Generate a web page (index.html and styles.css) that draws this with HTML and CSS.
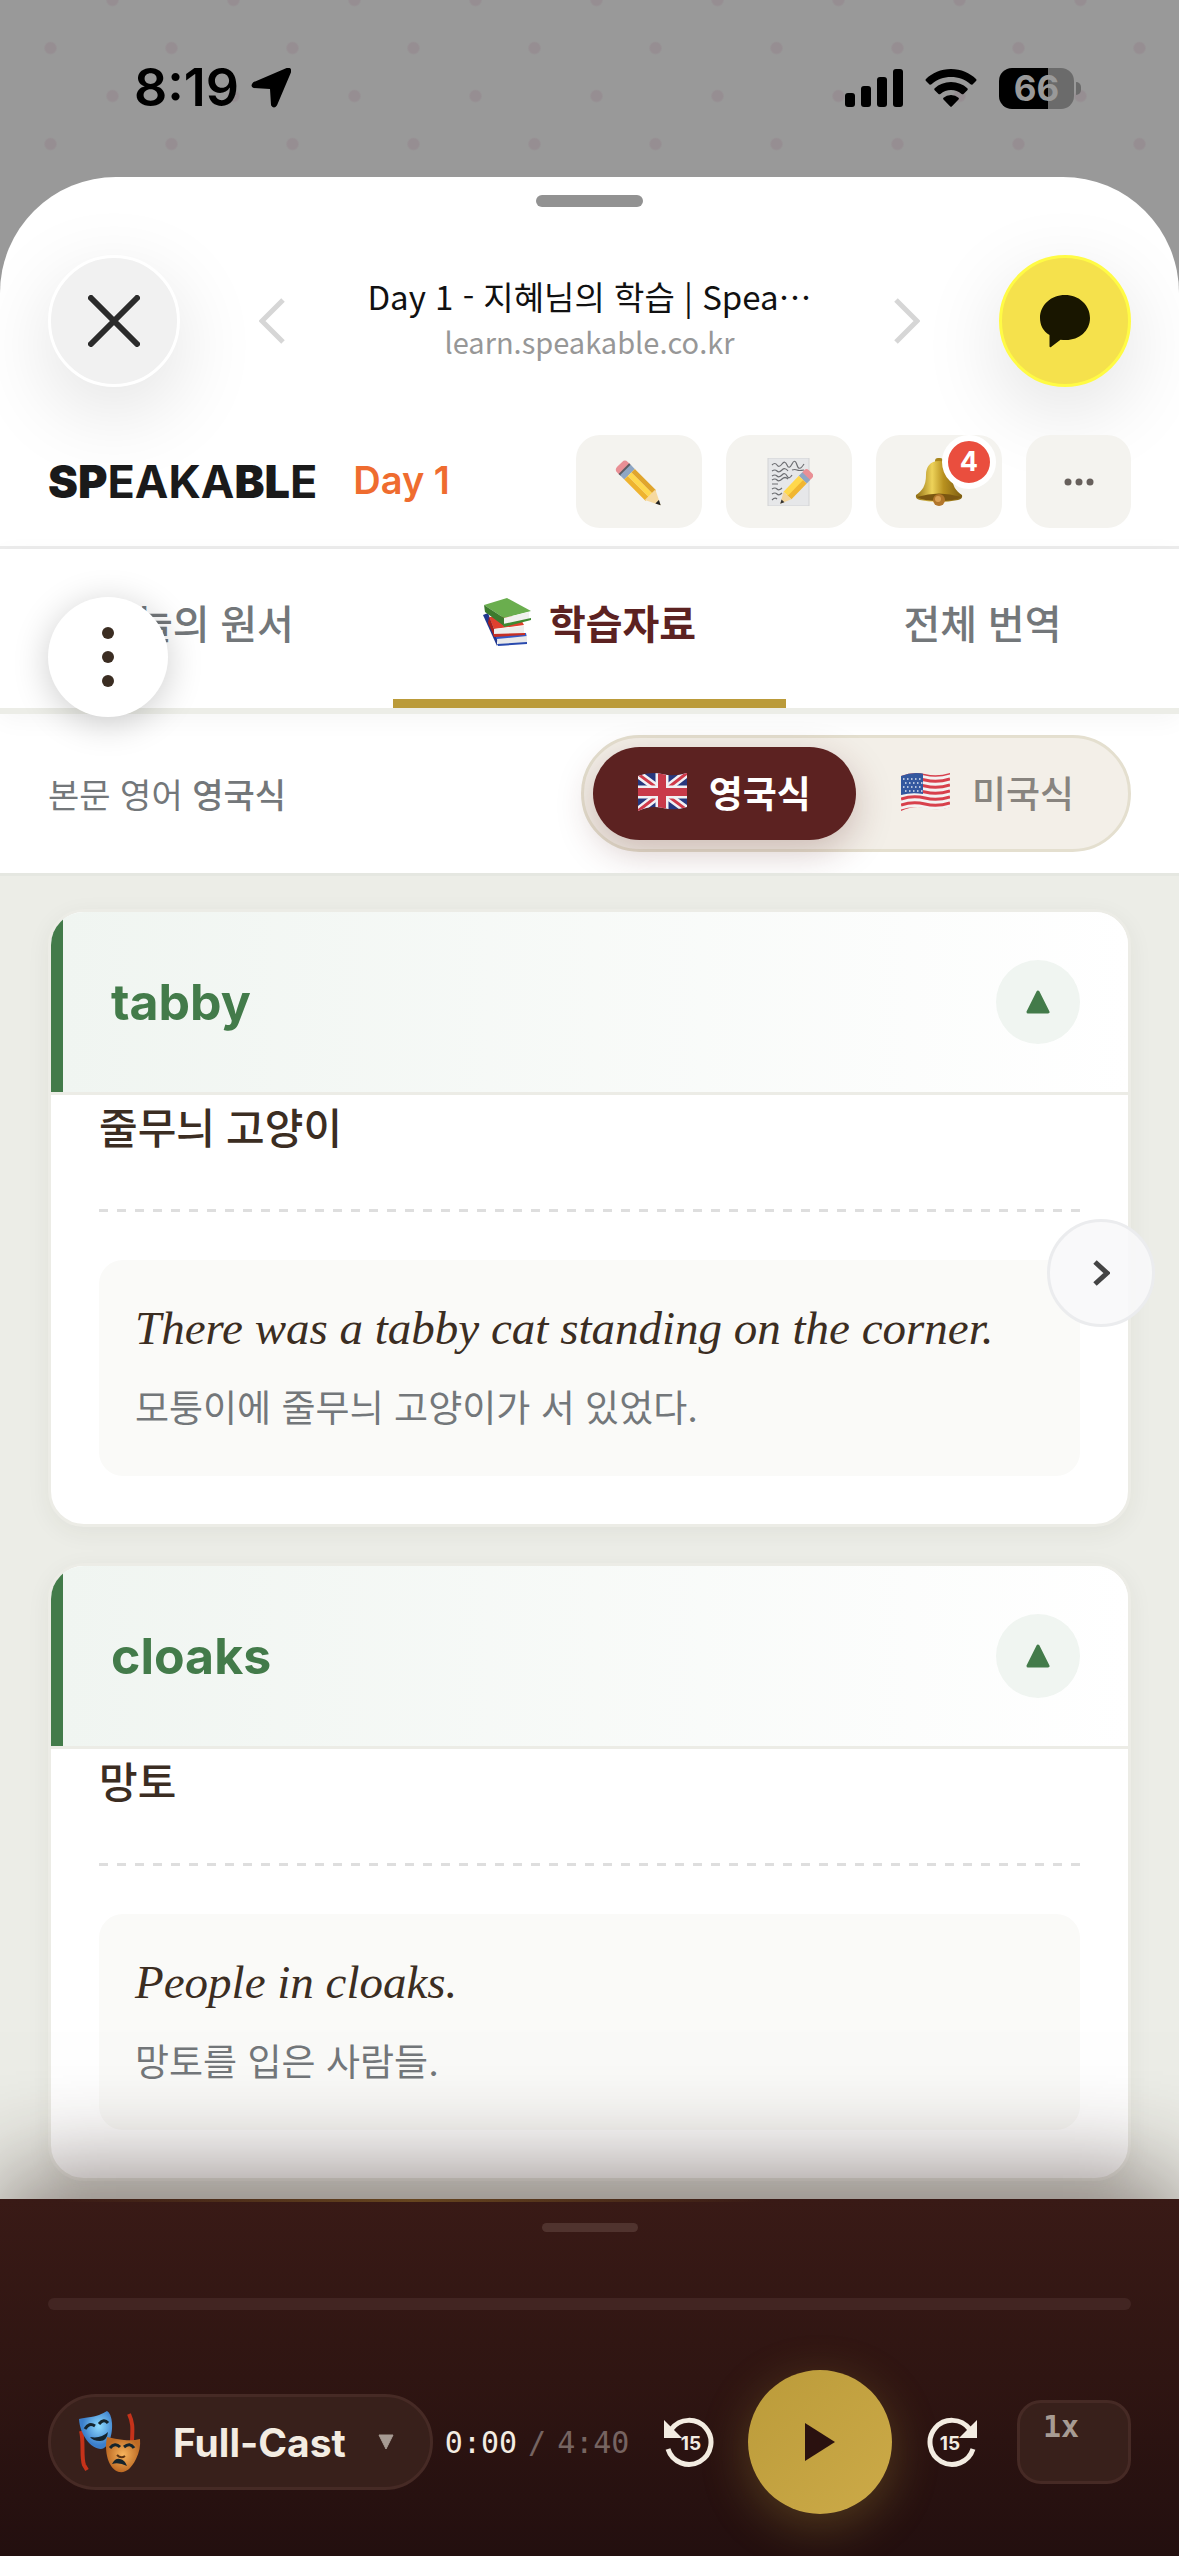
FILE: index.html
```html
<!DOCTYPE html>
<html lang="ko">
<head>
    <meta charset="UTF-8">
    <meta name="viewport" content="width=device-width, initial-scale=1.0">
    <title>Day 1 - 지혜님의 학습 | Speakable</title>
    <link rel="stylesheet" href="styles.css">
</head>
<body>
    <div class="status-bar">
        <div class="status-left">
            <span class="clock">8:19</span>
            <svg class="icon-location" viewBox="0 0 40 40"><path d="M36 1Q40 0 39 4L25 37Q23 40 21 37L20 21Q20 20 19 20L3 19Q0 18 3 15Z" stroke="#000" stroke-width="2" stroke-linejoin="round"/></svg>
        </div>
        <div class="status-right">
            <svg class="icon-signal" viewBox="0 0 58 38"><rect y="24" width="10" height="14" rx="3"/><rect x="16" y="17" width="10" height="21" rx="3"/><rect x="32" y="8" width="10" height="30" rx="3"/><rect x="48" width="10" height="38" rx="3"/></svg>
            <svg class="icon-wifi" viewBox="0 0 52 38"><path d="M26 0C36 0 45 4 51 10Q52 11 51 12L47.500 15.500Q46.500 16 45.500 15.200C40 10.500 33.500 8 26 8S12 10.500 6.500 15.200Q5.500 16 4.500 15.500L1 12Q0 11 1 10C7 4 16 0 26 0ZM26 13C32.500 13 38 15.300 42.300 19.200Q43.200 20.200 42.300 21.200L38.500 25Q37.600 25.700 36.600 25C33.600 22.500 30 21 26 21S18.400 22.500 15.400 25Q14.400 25.700 13.500 25L9.700 21.200Q8.800 20.200 9.700 19.200C14 15.300 19.500 13 26 13ZM26 26Q30.500 26 33.500 28.700Q34.300 29.600 33.500 30.400L27 37.300Q26 38.300 25 37.300L18.500 30.400Q17.700 29.600 18.500 28.700Q21.500 26 26 26Z"/></svg>
            <span class="battery">66</span>
        </div>
    </div>

    <div class="sheet">
        <div class="sheet-handle"></div>
        <div class="browser-bar">
            <button class="round-btn close-btn" aria-label="닫기">
                <svg width="52" height="52" viewBox="0 0 52 52"><path d="M3 3L49 49M49 3L3 49" fill="none" stroke="#2b2b2b" stroke-width="6" stroke-linecap="round"/></svg>
            </button>
            <div class="browser-nav">
                <button class="nav-arrow" aria-label="뒤로"><svg width="26" height="46" viewBox="0 0 26 46"><path d="M24 2L3 23L24 44" fill="none" stroke="#d6d6d6" stroke-width="5"/></svg></button>
                <div class="page-info">
                    <div class="page-title">Day 1 - 지혜님의 학습 | Spea⋯</div>
                    <div class="page-url">learn.speakable.co.kr</div>
                </div>
                <button class="nav-arrow" aria-label="앞으로"><svg width="26" height="46" viewBox="0 0 26 46"><path d="M2 2L23 23L2 44" fill="none" stroke="#d6d6d6" stroke-width="5"/></svg></button>
            </div>
            <button class="round-btn kakao-btn" aria-label="카카오톡 공유">
                <svg width="52" height="54" viewBox="0 0 52 54"><path d="M26 1C40 1 51 11 51 24S40 46 27 46Q24 46 21.500 45.700L12 53Q10.500 54 10.500 52V41C4 37 1 31 1 24C1 11 12 1 26 1Z" fill="#191600"/></svg>
            </button>
        </div>

        <header class="header">
            <div class="brand">
                <span class="logo">SP<span class="logo-thin">EAKA</span>BL<span class="logo-thin">E</span></span>
                <span class="day">Day 1</span>
            </div>
            <div class="header-actions">
                <button class="header-btn" aria-label="쓰기">
                    <svg width="48" height="48" viewBox="0 0 48 48">
                        <g transform="translate(5 6) rotate(45)">
                            <rect x="0" y="-7" width="10" height="15" rx="4" fill="#e98f95"/>
                            <rect x="6" y="-7" width="3" height="15" fill="#5a5c63"/>
                            <rect x="8" y="-7" width="6" height="15" fill="#8ea6c4"/>
                            <rect x="14" y="-7" width="30" height="5" fill="#e0a52c"/>
                            <rect x="14" y="-2" width="30" height="5" fill="#ffd84c"/>
                            <rect x="14" y="3" width="30" height="5" fill="#eeb32f"/>
                            <path d="M43 -7L58 0.500L43 8Z" fill="#f6d9a0"/>
                            <path d="M53 -2L58 0.500L53 3Z" fill="#222"/>
                        </g>
                    </svg>
                </button>
                <button class="header-btn" aria-label="메모">
                    <svg width="48" height="48" viewBox="0 0 48 48">
                        <rect x="3" y="0" width="41" height="48" fill="#e6e7e9" stroke="#d2d3d5"/>
                        <path d="M7 7q3-3 5 0t5-1t5 1t5-1t5 1t7-1M7 13q3-2 5 0t5-1t6 1M27 12q3-1 5 0t7 0M7 18q3-2 5 0t5-1t5 1t5-1M7 22q3-2 5 0t5-1t6 0M7 26h6M7 31q3-2 5 0t5-1M7 36q3-2 5 0t5-1M7 42q3-3 5-1" fill="none" stroke="#6d6e72" stroke-width="1.200"/>
                        <g transform="translate(43 17) rotate(134)">
                            <rect x="-4" y="-5" width="8" height="11" rx="3" fill="#e98f95"/>
                            <rect x="2" y="-5" width="5" height="11" fill="#8ea6c4"/>
                            <rect x="7" y="-5" width="22" height="6" fill="#f0b632"/>
                            <rect x="7" y="0" width="22" height="6" fill="#ffd84c"/>
                            <path d="M29 -5L40 0L29 6Z" fill="#f3d49b"/>
                            <path d="M36 -2L40 0L36 2Z" fill="#333"/>
                        </g>
                    </svg>
                </button>
                <button class="header-btn" aria-label="알림 4개">
                    <svg width="48" height="48" viewBox="0 0 48 48">
                        <defs>
                            <linearGradient id="bell" x1="0" x2="1"><stop offset="0" stop-color="#8f6d12"/><stop offset=".35" stop-color="#eed35a"/><stop offset=".6" stop-color="#b8911f"/><stop offset="1" stop-color="#7d5d10"/></linearGradient>
                        </defs>
                        <rect x="20" y="0" width="8" height="6" rx="3" fill="#a8851c"/>
                        <path d="M24 3C33 3 37 9 37 17C37 28 41 33 47 37Q48 41 43 42Q24 46 5 42Q0 41 1 37C7 33 11 28 11 17C11 9 15 3 24 3Z" fill="url(#bell)"/>
                        <path d="M2 39Q24 32 46 39Q40 43 24 43T2 39Z" fill="#7b5711"/>
                        <circle cx="24" cy="42" r="6" fill="#b2762a"/>
                        <circle cx="23" cy="41" r="3" fill="#d99f52"/>
                    </svg>
                    <span class="badge">4</span>
                </button>
                <button class="header-btn more-btn" aria-label="더보기">
                    <svg width="30" height="8" viewBox="0 0 30 8" fill="#67605c"><circle cx="4" cy="4" r="3.500"/><circle cx="15" cy="4" r="3.500"/><circle cx="26" cy="4" r="3.500"/></svg>
                </button>
            </div>
        </header>

        <nav class="tabs">
            <button class="tab">오늘의 원서</button>
            <button class="tab active">
                <svg width="48" height="48" viewBox="0 0 48 48">
                    <path d="M0 17L5 15L14 40V48Z" fill="#20378f"/>
                    <path d="M12 37L43 35L44 40L15 44Z" fill="#3559c7"/>
                    <path d="M14 41L44 38V45L15 48Z" fill="#e9e9ea"/>
                    <path d="M14 46L44 44V46L15 48Z" fill="#294aae"/>
                    <path d="M6 19L36 18L41 27L11 31Z" fill="#e0402f"/>
                    <path d="M6 19L11 31V38L5 25Z" fill="#a9201b"/>
                    <path d="M11 31L41 28V36L11 37Z" fill="#eeeeec"/>
                    <path d="M10 36L42 35V37L11 39Z" fill="#c62f24"/>
                    <path d="M1 7L24 0L48 13L21 20Z" fill="#6aae4e"/>
                    <path d="M1 7L21 20V28L2 14Z" fill="#3c7a2e"/>
                    <path d="M21 20L46 14V21L21 27Z" fill="#f1f1ee"/>
                    <path d="M20 26L48 20V22L21 29Z" fill="#3f8a31"/>
                </svg>
                학습자료
            </button>
            <button class="tab">전체 번역</button>
            <button class="menu-fab" aria-label="메뉴"><i></i><i></i><i></i></button>
        </nav>

        <div class="accent-bar">
            <span class="accent-label">본문 영어 <b>영국식</b></span>
            <div class="accent-toggle">
                <button class="accent-option active">
                    <svg width="49" height="40" viewBox="0 0 49 40">
                        <clipPath id="flag"><path d="M0 4Q12 -1 24 2T49 1V35Q37 39 25 36T0 39Z"/></clipPath>
                        <g clip-path="url(#flag)">
                            <rect width="49" height="40" fill="#27387e"/>
                            <path d="M0 2L49 38M49 1L0 39" stroke="#f1f1f4" stroke-width="8"/>
                            <path d="M0 2L49 38M49 1L0 39" stroke="#cf3a4a" stroke-width="3"/>
                            <path d="M24 0V40M0 20H49" stroke="#f1f1f4" stroke-width="13"/>
                            <path d="M24 0V40M0 20H49" stroke="#c93a4a" stroke-width="8"/>
                        </g>
                    </svg>
                    영국식
                </button>
                <button class="accent-option">
                    <svg width="49" height="40" viewBox="0 0 49 40">
                        <g clip-path="url(#flag)">
                            <rect width="49" height="40" fill="#f4f2f2"/>
                            <path d="M0 3Q12 -1 24 2T49 1M0 9Q12 5 24 8T49 7M0 15Q12 11 24 14T49 13M0 21Q12 17 24 20T49 19M0 27Q12 23 24 26T49 25M0 33Q12 29 24 32T49 31M0 39Q12 35 24 38T49 37" fill="none" stroke="#d8404c" stroke-width="3"/>
                            <path d="M0 0H22V22Q11 20 0 23Z" fill="#34589f"/>
                            <path d="M2 7H22M4 11H22M2 15H22M4 19H22" stroke="#dfe6f2" stroke-width="1.500" stroke-dasharray="1.500 2.500"/>
                        </g>
                    </svg>
                    미국식
                </button>
            </div>
        </div>

        <main class="word-list">
            <article class="word-card">
                <div class="word-head">
                    <h2>tabby</h2>
                    <button class="fold-btn" aria-label="접기"><svg width="24" height="24" viewBox="0 0 24 24"><path d="M12 2L22 22H2Z" fill="#437b4a" stroke="#437b4a" stroke-width="3" stroke-linejoin="round"/></svg></button>
                </div>
                <div class="word-body">
                    <p class="meaning">줄무늬 고양이</p>
                    <div class="dashed-line"></div>
                    <div class="example">
                        <p class="example-en">There was a tabby cat standing on the corner.</p>
                        <p class="example-ko">모퉁이에 줄무늬 고양이가 서 있었다.</p>
                    </div>
                </div>
            </article>
            <article class="word-card">
                <div class="word-head">
                    <h2>cloaks</h2>
                    <button class="fold-btn" aria-label="접기"><svg width="24" height="24" viewBox="0 0 24 24"><path d="M12 2L22 22H2Z" fill="#437b4a" stroke="#437b4a" stroke-width="3" stroke-linejoin="round"/></svg></button>
                </div>
                <div class="word-body">
                    <p class="meaning">망토</p>
                    <div class="dashed-line"></div>
                    <div class="example">
                        <p class="example-en">People in cloaks.</p>
                        <p class="example-ko">망토를 입은 사람들.</p>
                    </div>
                </div>
            </article>
            <button class="next-fab" aria-label="다음"><svg width="18" height="28" viewBox="0 0 18 28"><path d="M3 3L15 14L3 25" fill="none" stroke="#444" stroke-width="5"/></svg></button>
        </main>
    </div>

    <footer class="player">
        <div class="player-handle"></div>
        <input type="range" class="progress" min="0" max="280" value="0" aria-label="재생 위치">
        <div class="controls">
            <div class="track">
                <button class="cast-btn">
                    <svg width="62" height="62" viewBox="0 0 62 62">
                        <defs>
                            <radialGradient id="blueMask" cx=".6" cy=".4"><stop offset="0" stop-color="#8fdcff"/><stop offset="1" stop-color="#3b7ecb"/></radialGradient>
                            <radialGradient id="goldMask"><stop offset="0" stop-color="#f7b45c"/><stop offset="1" stop-color="#bd6a24"/></radialGradient>
                        </defs>
                        <path d="M2 20C5 30 2 46 5 54L8 59M50 3C55 14 53 20 53 32" fill="none" stroke="#c5321a" stroke-width="4"/>
                        <path d="M0 8Q4 7 12 6T28 0Q32 2 33 12C34 26 28 38 22 38C12 38 1 24 0 8Z" fill="url(#blueMask)"/>
                        <path d="M6 18q4-7 10-3M20 13q5-6 9-1" fill="none" stroke="#15242c" stroke-width="3"/>
                        <path d="M11 26Q22 28 29 21Q28 30 21 30T11 26Z" fill="#15242c"/>
                        <path d="M28 26Q36 28 45 29T61 28Q62 38 57 48C52 58 47 62 40 61C29 58 25 40 28 26Z" fill="url(#goldMask)"/>
                        <path d="M31 37q5-6 10-1M45 36q6-5 10 1" fill="none" stroke="#15242c" stroke-width="3"/>
                        <path d="M38 44q4 4 8 1" fill="none" stroke="#5c3312" stroke-width="2"/>
                        <path d="M33 53Q36 47 41 48T48 55Q40 51 33 53Z" fill="#15242c"/>
                    </svg>
                    <span>Full-Cast</span>
                    <svg width="16" height="16" viewBox="0 0 16 16"><path d="M1 1H15L8 15Z" fill="#a79b93" stroke="#a79b93" stroke-linejoin="round"/></svg>
                </button>
                <div class="time">
                    <span>0:00</span>
                    <span class="time-total">/</span>
                    <span class="time-total">4:40</span>
                </div>
            </div>
            <button class="skip-btn" aria-label="15초 뒤로">
                <svg width="50" height="50" viewBox="0 0 50 50">
                    <path d="M7.500 12A22 22 0 1 1 4 32" fill="none" stroke="#f3ece2" stroke-width="5"/>
                    <path d="M0 3V21H18Z" fill="#f3ece2"/>
                    <text x="27" y="33" text-anchor="middle">15</text>
                </svg>
            </button>
            <button class="play-btn" aria-label="재생"><svg width="30" height="38" viewBox="0 0 30 38"><path d="M0 0L30 19L0 38Z" fill="#2a110f"/></svg></button>
            <button class="skip-btn" aria-label="15초 앞으로">
                <svg width="50" height="50" viewBox="0 0 50 50">
                    <path d="M42.500 12A22 22 0 1 0 46 32" fill="none" stroke="#f3ece2" stroke-width="5"/>
                    <path d="M50 3V21H32Z" fill="#f3ece2"/>
                    <text x="23" y="33" text-anchor="middle">15</text>
                </svg>
            </button>
            <select class="speed" aria-label="재생 속도">
                <option>1x</option>
            </select>
        </div>
    </footer>
</body>
</html>
```
FILE: styles.css
```css
* {
    box-sizing: border-box;
    margin: 0;
    padding: 0;
}
body {
    display: flex;
    flex-direction: column;
    min-height: 100vh;
    font-family: Inter, "Noto Sans CJK KR", sans-serif;
    color: #3b2d22;
    /* 점 무늬 배경 */
    background-color: #999;
    background-image:
        radial-gradient(circle, #968e92 5px, transparent 7px),
        radial-gradient(circle, #968e92 5px, transparent 7px);
    background-size: 121px 96px;
    background-position: -10px 0, 52px 48px;
}
button, select {
    font-family: inherit;
    border: none;
    background: none;
    color: inherit;
    cursor: pointer;
}
svg {
    display: block;
    flex-shrink: 0;
}

/* 상태 표시줄 */
.status-bar {
    display: flex;
    justify-content: space-between;
    height: 177px;
    padding: 63px 105px 0 134px;
    color: #000;
}
.status-left, .status-right {
    display: flex;
    align-items: center;
    height: 50px;
}
.status-left {
    gap: 12px;
}
.status-right {
    gap: 22px;
}
.clock {
    font-size: 52px;
    font-weight: 600;
    line-height: 50px;
}
.icon-location {
    width: 40px;
}
.icon-signal {
    width: 58px;
}
.icon-wifi {
    width: 52px;
}
.battery {
    position: relative;
    width: 75px;
    height: 41px;
    border-radius: 13px;
    background: linear-gradient(90deg, #000 66%, #6b6b6b 66%);
    color: #999;
    font-size: 35px;
    font-weight: 700;
    line-height: 41px;
    text-align: center;
}
.battery::after {
    content: "";
    position: absolute;
    top: 14px;
    right: -7px;
    width: 5px;
    height: 13px;
    border-radius: 0 5px 5px 0;
    background: #6b6b6b;
}

/* 인앱 브라우저 */
.sheet {
    flex: 1;
    display: flex;
    flex-direction: column;
    padding-top: 18px;
    border-radius: 116px 116px 0 0;
    background: #fff;
    overflow: hidden;
}
.sheet-handle {
    width: 107px;
    height: 12px;
    margin: 0 auto;
    border-radius: 6px;
    background: #929292;
}
.browser-bar {
    display: flex;
    align-items: center;
    margin-top: 48px;
    padding: 0 48px;
}
.round-btn {
    display: flex;
    align-items: center;
    justify-content: center;
    width: 132px;
    height: 132px;
    border-radius: 50%;
    box-shadow: 0 24px 84px rgba(0, 0, 0, 0.12);
}
.close-btn {
    border: 3px solid #fff;
    background: #f1f1f1;
}
.kakao-btn {
    border: 3px solid #fffb45;
    background: #f5e14c;
}
.browser-nav {
    flex: 1;
    display: flex;
    align-items: center;
    justify-content: space-between;
    padding: 0 79px;
}
.page-info {
    padding-bottom: 8px;
    text-align: center;
    white-space: nowrap;
}
.page-title {
    font-family: "Noto Sans CJK KR", sans-serif;
    font-size: 33px;
    line-height: 48px;
    color: #111;
}
.page-url {
    font-family: "Noto Sans CJK KR", sans-serif;
    font-size: 29px;
    line-height: 42px;
    color: #979797;
}

.header {
    display: flex;
    align-items: center;
    justify-content: space-between;
    padding: 48px 48px 18px;
    border-bottom: 3px solid #ececec;
}
.brand {
    display: flex;
    align-items: center;
    gap: 36px;
}
.logo {
    font-size: 45px;
    font-weight: 900;
    color: #1a1a1a;
}
.logo-thin {
    font-weight: 700;
}
.day {
    padding-bottom: 4px;
    font-size: 38px;
    font-weight: 600;
    color: #ef6c2f;
}
.header-actions {
    display: flex;
    gap: 24px;
}
.header-btn {
    position: relative;
    display: flex;
    align-items: center;
    justify-content: center;
    width: 126px;
    height: 93px;
    border-radius: 24px;
    background: #f4f3ef;
}
.more-btn {
    width: 105px;
}
.badge {
    position: absolute;
    top: 0;
    right: 6px;
    width: 54px;
    height: 54px;
    border: 6px solid #fff;
    border-radius: 50%;
    background: #ea4e3e;
    color: #fff;
    font-size: 27px;
    font-weight: 700;
    line-height: 42px;
    text-align: center;
}

/* 탭 */
.tabs {
    position: relative;
    z-index: 1;
    display: flex;
    border-bottom: 6px solid #ecede7;
    background: #fff;
    box-shadow: 0 6px 24px rgba(0, 0, 0, 0.04);
}
.tab {
    flex: 1;
    display: flex;
    align-items: center;
    justify-content: center;
    gap: 18px;
    height: 159px;
    padding-bottom: 4px;
    border-bottom: 9px solid transparent;
    font-size: 40px;
    font-weight: 500;
    color: #73777a;
}
.tab.active {
    border-bottom-color: #bb9b3a;
    font-weight: 700;
    color: #5c2221;
}
.menu-fab {
    position: absolute;
    top: 48px;
    left: 48px;
    display: flex;
    flex-direction: column;
    align-items: center;
    justify-content: center;
    gap: 12px;
    width: 120px;
    height: 120px;
    border-radius: 50%;
    background: #fff;
    box-shadow: 0 6px 36px rgba(0, 0, 0, 0.2);
}
.menu-fab i {
    width: 12px;
    height: 12px;
    border-radius: 50%;
    background: #3b2d22;
}

/* 영국식 / 미국식 */
.accent-bar {
    display: flex;
    align-items: center;
    justify-content: space-between;
    padding: 21px 48px;
}
.accent-label {
    font-size: 34px;
    color: #73777a;
}
.accent-label b {
    font-weight: 500;
}
.accent-toggle {
    display: flex;
    padding: 9px;
    border: 3px solid #e4dfcf;
    border-radius: 60px;
    background: #f3efe8;
}
.accent-option {
    display: flex;
    align-items: center;
    gap: 22px;
    height: 93px;
    padding: 0 45px 4px;
    border-radius: 48px;
    font-size: 37px;
    font-weight: 500;
    color: #88847f;
}
.accent-option.active {
    background: #5c2221;
    color: #fff;
    font-weight: 700;
    box-shadow: 0 12px 36px rgba(92, 34, 33, 0.25);
}

/* 단어 카드 */
.word-list {
    position: relative;
    flex: 1;
    display: flex;
    flex-direction: column;
    gap: 36px;
    padding: 36px 48px 18px;
    background: #ecede7;
    box-shadow: inset 0 3px 0 #e5e7e1;
}
.word-card {
    border: 3px solid #ecece6;
    border-radius: 36px;
    background: #fff;
    box-shadow: 0 6px 24px rgba(59, 45, 34, 0.06);
    overflow: hidden;
}
.word-head {
    display: flex;
    align-items: center;
    justify-content: space-between;
    padding: 48px;
    border-left: 12px solid #437b4a;
    background: linear-gradient(90deg, #f0f5f1, #fff);
}
.word-head h2 {
    font-size: 50px;
    font-weight: 700;
    line-height: 60px;
    color: #437b4a;
}
.fold-btn {
    display: flex;
    align-items: center;
    justify-content: center;
    width: 84px;
    height: 84px;
    border-radius: 50%;
    background: #f0f5f1;
}
.word-body {
    padding: 0 48px 48px;
    border-top: 3px solid #ecece6;
}
.meaning {
    padding-bottom: 46px;
    font-size: 42px;
    font-weight: 500;
    line-height: 68px;
}
.dashed-line {
    height: 3px;
    margin-bottom: 48px;
    background: repeating-linear-gradient(90deg, #dedede 0 9px, transparent 9px 18px);
}
.example {
    display: flex;
    flex-direction: column;
    gap: 18px;
    padding: 36px;
    border-radius: 24px;
    background: #fafaf8;
}
.example-en {
    font-family: Georgia, "Liberation Serif", serif;
    font-size: 47px;
    font-style: italic;
    line-height: 64px;
}
.example-ko {
    font-size: 37px;
    line-height: 62px;
    color: #73777a;
}
.next-fab {
    position: absolute;
    top: 346px;
    right: 24px;
    display: flex;
    align-items: center;
    justify-content: center;
    width: 108px;
    height: 108px;
    border: 3px solid #ebecee;
    border-radius: 50%;
    background: rgba(248, 248, 249, 0.9);
}

/* 플레이어 */
.player {
    position: relative;
    padding: 24px 48px 42px;
    background: linear-gradient(#391a16, #2f1512 50%, #230f0f);
    box-shadow: 0 -24px 96px rgba(44, 26, 20, 0.55);
}
.player::before {
    content: "";
    position: absolute;
    top: 0;
    left: 5%;
    right: 35%;
    height: 3px;
    background: linear-gradient(90deg, transparent, #66451f, transparent);
}
.player-handle {
    width: 96px;
    height: 9px;
    margin: 0 auto 66px;
    border-radius: 5px;
    background: #50332e;
}
.progress {
    display: block;
    width: 100%;
    height: 12px;
    appearance: none;
    border-radius: 6px;
    background: #422522;
}
.progress::-webkit-slider-thumb {
    appearance: none;
    width: 0;
    height: 0;
}
.controls {
    display: flex;
    align-items: center;
    justify-content: space-between;
    margin-top: 60px;
    color: #f3ece2;
}
.track {
    display: flex;
    align-items: center;
    gap: 12px;
}
.cast-btn {
    display: flex;
    align-items: center;
    gap: 32px;
    height: 96px;
    padding: 0 36px 0 28px;
    border: 3px solid #462a25;
    border-radius: 48px;
    background: #38201b;
    font-size: 39px;
    font-weight: 700;
}
.time {
    display: flex;
    gap: 11px;
    font-family: "DejaVu Sans Mono", monospace;
    font-size: 30px;
}
.time-total {
    color: #766461;
}
.skip-btn text {
    font-size: 19px;
    font-weight: 700;
    fill: #f3ece2;
}
.play-btn {
    display: flex;
    align-items: center;
    justify-content: center;
    width: 144px;
    height: 144px;
    border-radius: 50%;
    background: linear-gradient(135deg, #bb9b3a, #ccaa48);
    box-shadow: 0 12px 48px rgba(187, 155, 58, 0.3);
}
.speed {
    width: 114px;
    height: 84px;
    margin-left: 6px;
    padding: 0 0 32px 23px;
    appearance: none;
    border: 3px solid #462a25;
    border-radius: 24px;
    background: #38201b;
    font-family: "DejaVu Sans Mono", monospace;
    font-size: 30px;
    font-weight: 700;
    color: #a79b93;
}
```
